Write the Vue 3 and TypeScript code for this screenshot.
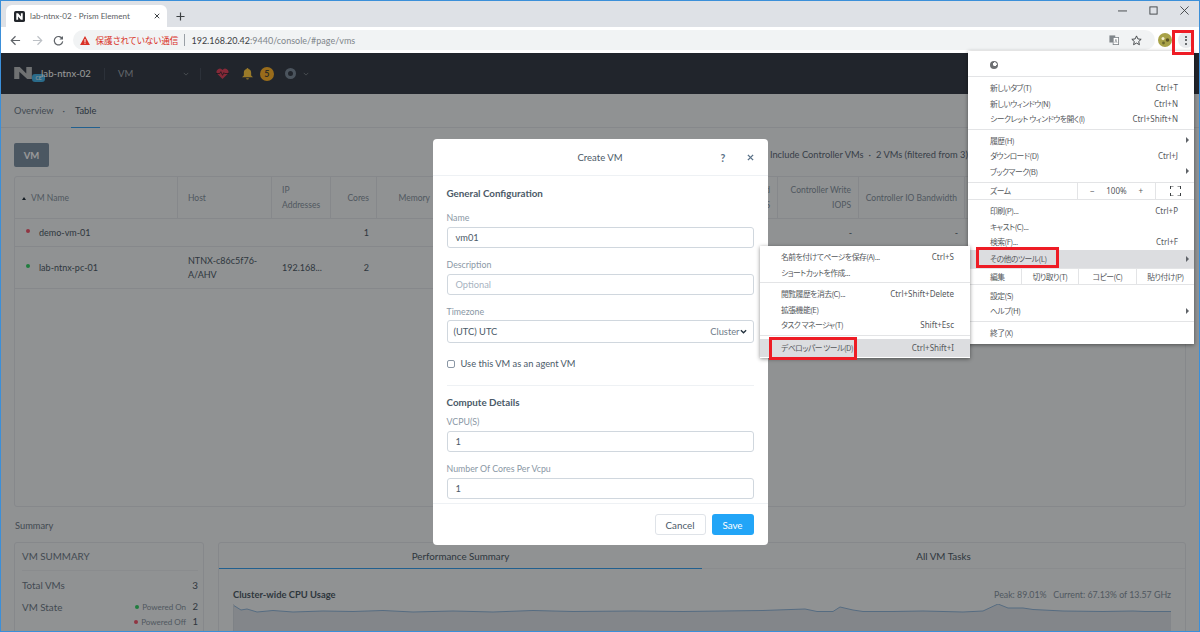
<template>
  <div class="shell">
    <!-- browser chrome -->
    <div class="tabstrip">
      <div class="tab">
        <svg class="favicon" viewBox="0 0 12 12">
          <rect width="12" height="12" rx="2" fill="#22262b" />
          <path d="M2.5 9.5V2.5h2l3 3.6V2.5h2v7h-2l-3-3.6v3.6z" fill="#fff" />
        </svg>
        <span class="tab-title">lab-ntnx-02 - Prism Element</span>
        <svg class="tab-close" viewBox="0 0 8 8"><path d="M1 1l6 6M7 1L1 7" stroke="#3c4043" stroke-width="1.3" /></svg>
      </div>
      <svg class="new-tab" viewBox="0 0 10 10"><path d="M5 .5v9M.5 5h9" stroke="#3c4043" stroke-width="1.3" /></svg>
      <div class="win-controls">
        <svg viewBox="0 0 10 10"><path d="M0 5.5h10" stroke="#3c4043" stroke-width="1" /></svg>
        <svg viewBox="0 0 10 10"><rect x="1" y="1" width="8" height="8" fill="none" stroke="#3c4043" stroke-width="1" /></svg>
        <svg viewBox="0 0 10 10"><path d="M.5.5l9 9M9.5.5l-9 9" stroke="#3c4043" stroke-width="1" /></svg>
      </div>
    </div>
    <div class="toolbar">
      <svg class="nav-icon" viewBox="0 0 12 12"><path d="M11 6H1.6M6 1.4L1.4 6 6 10.6" fill="none" stroke="#5f6368" stroke-width="1.3" /></svg>
      <svg class="nav-icon" viewBox="0 0 12 12"><path d="M1 6h9.4M6 1.4L10.6 6 6 10.6" fill="none" stroke="#bdc1c6" stroke-width="1.3" /></svg>
      <svg class="nav-icon" viewBox="0 0 12 12">
        <path d="M10.2 4.2A4.6 4.6 0 1 0 10.6 7" fill="none" stroke="#5f6368" stroke-width="1.3" />
        <path d="M10.9 1v4H7z" fill="#5f6368" />
      </svg>
      <div class="omnibox">
        <svg class="warn" viewBox="0 0 12 11">
          <path d="M6 0l6 11H0z" fill="#d93025" />
          <path d="M5.4 3.6h1.2v4H5.4zM5.4 8.3h1.2v1.2H5.4z" fill="#fff" />
        </svg>
        <span class="insecure">保護されていない通信</span>
        <span class="omni-sep"></span>
        <span class="url"><b>192.168.20.42</b>:9440/console/#page/vms</span>
        <svg class="translate" viewBox="0 0 12 12">
          <rect x="0.5" y="0.5" width="7" height="8.5" fill="#80868b" />
          <rect x="5" y="3" width="6.5" height="8.5" fill="#fff" stroke="#80868b" />
          <path d="M7 9.5l1.3-4.4 1.3 4.4" fill="none" stroke="#80868b" stroke-width=".8" />
        </svg>
        <svg class="star" viewBox="0 0 12 12"><path d="M6 1l1.5 3.3 3.6.4-2.7 2.4.8 3.5L6 8.8l-3.2 1.8.8-3.5L.9 4.7l3.6-.4z" fill="none" stroke="#3c4043" stroke-width="1" /></svg>
      </div>
      <svg class="avatar" viewBox="0 0 14 14">
        <circle cx="7" cy="7" r="7" fill="#a8a248" />
        <circle cx="5" cy="5.5" r="1.5" fill="#f4efd0" />
        <circle cx="9.5" cy="7" r="1.8" fill="#5c5426" />
        <circle cx="5.5" cy="10" r="1.4" fill="#6d6a2d" />
      </svg>
      <div class="kebab"><i></i><i></i><i></i></div>
    </div>

    <!-- Prism page, dimmed by the dialog backdrop -->
    <div class="app">
      <header class="app-header">
        <svg class="logo" viewBox="0 0 20 14"><path d="M0 0h6l7 7V0h6v13h-5L5.500 5v8H0z" fill="#b9bcbf" /></svg>
        <span class="ce">CE</span>
        <span class="cluster">lab-ntnx-02</span>
        <span class="head-sep"></span>
        <span class="perspective">VM</span>
        <svg class="chev" viewBox="0 0 8 5"><path d="M1 1l3 3 3-3" fill="none" stroke="#7e858c" stroke-width="1.2" /></svg>
        <span class="head-sep second"></span>
        <svg class="heart" viewBox="0 0 14 12">
          <path d="M7 12L1.200 6.200A3.300 3.300 0 0 1 7 2.200a3.300 3.300 0 0 1 5.800 4z" fill="#e0455e" />
          <path d="M0 6h4l1.200-2 1.800 4 1.500-3 .8 1h4.700" fill="none" stroke="#22272e" stroke-width=".8" />
        </svg>
        <svg class="bell" viewBox="0 0 12 13">
          <path d="M6 0a1 1 0 0 1 1 1c2 .5 3 2 3 4v3l2 2H0l2-2V5c0-2 1-3.500 3-4a1 1 0 0 1 1-1z" fill="#ffcb45" />
          <path d="M4.500 11h3a1.500 1.500 0 0 1-3 0z" fill="#ffcb45" />
        </svg>
        <span class="alert-count">5</span>
        <span class="ring"></span>
        <svg class="chev small" viewBox="0 0 8 5"><path d="M1 1l3 3 3-3" fill="none" stroke="#7e858c" stroke-width="1.2" /></svg>
      </header>

      <nav class="subnav">
        <span class="subnav-item">Overview</span>
        <span class="subnav-dot">·</span>
        <span class="subnav-item active">Table</span>
      </nav>

      <main class="content">
        <div class="action-row">
          <button class="vm-btn">VM</button>
          <div class="filter-info">
            <span>Include Controller VMs</span>
            <span class="dot">·</span>
            <span>2 VMs (filtered from 3)</span>
          </div>
        </div>

        <div class="vm-table">
          <div class="t-row t-head">
            <div v-for="col in columns" :key="col.key" class="cell" :class="col.align">
              <template v-if="col.key === 'name'"><span class="sort"></span></template>
              <span>{{ col.label }}</span>
            </div>
          </div>
          <div v-for="vm in vms" :key="vm.name" class="t-row" :style="{ height: vm.height + 'px' }">
            <div class="cell name-cell">
              <span class="state" :class="vm.on ? 'on' : 'off'"></span>
              <span>{{ vm.name }}</span>
            </div>
            <div class="cell">{{ vm.host }}</div>
            <div class="cell">{{ vm.ip }}</div>
            <div class="cell right cores">{{ vm.cores }}</div>
            <div class="cell"></div>
            <div class="cell"></div>
            <div class="cell right"></div>
            <div class="cell right">{{ vm.io }}</div>
            <div class="cell right">{{ vm.io }}</div>
            <div class="cell"></div>
          </div>
        </div>

        <div class="summary-title">Summary</div>
        <div class="summary">
          <section class="card vm-summary">
            <h3>VM SUMMARY</h3>
            <div class="sum-row"><span>Total VMs</span><span class="val">3</span></div>
            <div class="sum-row state-row">
              <span>VM State</span>
              <span class="pow"><i class="state on"></i>Powered On<b>2</b></span>
            </div>
            <div class="sum-row sub-row">
              <span class="pow"><i class="state off"></i>Powered Off<b>1</b></span>
            </div>
          </section>
          <section class="card perf">
            <div class="perf-tabs">
              <div class="perf-tab active">Performance Summary</div>
              <div class="perf-tab">All VM Tasks</div>
            </div>
            <div class="chart-head">
              <span class="chart-title">Cluster-wide CPU Usage</span>
              <span class="chart-stats">Peak: 89.01%&nbsp;&nbsp; Current: 67.13% of 13.57 GHz</span>
            </div>
            <svg class="chart" viewBox="0 0 938 28" preserveAspectRatio="none">
              <path :d="chartArea" fill="#dbe0e6" />
              <path :d="chartLine" fill="none" stroke="#8fb4d8" stroke-width="1" />
              <path d="M.5 0v28" stroke="#d3d9df" stroke-width="1" />
            </svg>
          </section>
        </div>
      </main>

      <div class="backdrop">
        <div class="modal">
          <div class="modal-head">
            <span class="modal-title">Create VM</span>
            <span class="modal-help">?</span>
            <svg class="modal-x" viewBox="0 0 8 8"><path d="M1 1l6 6M7 1L1 7" stroke="#5b7288" stroke-width="1.600" /></svg>
          </div>
          <div class="modal-body">
            <h4>General Configuration</h4>
            <label>Name</label>
            <div class="input">vm01</div>
            <label>Description</label>
            <div class="input placeholder">Optional</div>
            <label>Timezone</label>
            <div class="input select">
              <span>(UTC) UTC</span>
              <span class="tz-right">Cluster<svg viewBox="0 0 8 5"><path d="M1 1l3 3 3-3" fill="none" stroke="#22303c" stroke-width="1.500" /></svg></span>
            </div>
            <div class="check-row"><span class="check"></span>Use this VM as an agent VM</div>
            <hr />
            <h4>Compute Details</h4>
            <label class="tight">VCPU(S)</label>
            <div class="input">1</div>
            <label>Number Of Cores Per Vcpu</label>
            <div class="input">1</div>
          </div>
          <div class="modal-foot">
            <button class="btn-cancel">Cancel</button>
            <button class="btn-save">Save</button>
          </div>
        </div>
      </div>
    </div>

    <!-- chrome menu -->
    <div class="menu main-menu">
      <div class="avatar-row"><span class="mini-avatar"></span></div>
      <template v-for="(row, i) in mainMenu" :key="i">
        <div v-if="row.type === 'sep'" class="sep"></div>
        <div v-else-if="row.type === 'zoom'" class="zoom-row">
          <span class="zoom-label">ズーム</span>
          <span class="zoom-ctl"><span>−</span><span>100%</span><span>+</span></span>
          <span class="zoom-full">
            <svg viewBox="0 0 10 10"><path d="M0 3V0h3M7 0h3v3M10 7v3H7M3 10H0V7" fill="none" stroke="#3c4043" stroke-width="1" /></svg>
          </span>
        </div>
        <div v-else-if="row.type === 'edit'" class="edit-row">
          <span class="edit-label">編集</span>
          <span>切り取り(T)</span>
          <span>コピー(C)</span>
          <span>貼り付け(P)</span>
        </div>
        <div v-else class="item" :class="{ hl: row.hl }">
          <span>{{ row.label }}</span>
          <span v-if="row.keys" class="keys">{{ row.keys }}</span>
          <span v-if="row.arrow" class="arrow"></span>
        </div>
      </template>
    </div>

    <div class="menu sub-menu">
      <template v-for="(row, i) in subMenu" :key="i">
        <div v-if="row.type === 'sep'" class="sep"></div>
        <div v-else class="item" :class="{ hl: row.hl }">
          <span>{{ row.label }}</span>
          <span v-if="row.keys" class="keys">{{ row.keys }}</span>
        </div>
      </template>
    </div>

    <!-- annotations on the screenshot -->
    <div class="mark mark-kebab"></div>
    <div class="mark mark-more"></div>
    <div class="mark mark-dev"></div>
    <div class="window-frame"></div>
  </div>
</template>

<script setup lang="ts">
import { computed } from 'vue'

interface MenuRow {
  type?: 'sep' | 'zoom' | 'edit'
  label?: string
  keys?: string
  arrow?: boolean
  hl?: boolean
}

const columns = [
  { key: 'name', label: 'VM Name', align: '' },
  { key: 'host', label: 'Host', align: '' },
  { key: 'ip', label: 'IP Addresses', align: '' },
  { key: 'cores', label: 'Cores', align: 'right' },
  { key: 'memory', label: 'Memory', align: 'right' },
  { key: 'storage', label: '', align: '' },
  { key: 'read', label: 'Controller Read IOPS', align: 'right' },
  { key: 'write', label: 'Controller Write IOPS', align: 'right' },
  { key: 'bw', label: 'Controller IO Bandwidth', align: 'right' },
  { key: 'latency', label: '', align: '' }
]

const vms = [
  { name: 'demo-vm-01', host: '', ip: '', cores: 1, on: false, height: 28, io: '-' },
  { name: 'lab-ntnx-pc-01', host: 'NTNX-c86c5f76-A/AHV', ip: '192.168...', cores: 2, on: true, height: 42, io: '' }
]

const mainMenu: MenuRow[] = [
  { type: 'sep' },
  { label: '新しいタブ(T)', keys: 'Ctrl+T' },
  { label: '新しいウィンドウ(N)', keys: 'Ctrl+N' },
  { label: 'シークレット ウィンドウを開く(I)', keys: 'Ctrl+Shift+N' },
  { type: 'sep' },
  { label: '履歴(H)', arrow: true },
  { label: 'ダウンロード(D)', keys: 'Ctrl+J' },
  { label: 'ブックマーク(B)', arrow: true },
  { type: 'zoom' },
  { label: '印刷(P)...', keys: 'Ctrl+P' },
  { label: 'キャスト(C)...' },
  { label: '検索(F)...', keys: 'Ctrl+F' },
  { label: 'その他のツール(L)', arrow: true, hl: true },
  { type: 'edit' },
  { label: '設定(S)' },
  { label: 'ヘルプ(H)', arrow: true },
  { type: 'sep' },
  { label: '終了(X)' }
]

const subMenu: MenuRow[] = [
  { label: '名前を付けてページを保存(A)...', keys: 'Ctrl+S' },
  { label: 'ショートカットを作成...' },
  { type: 'sep' },
  { label: '閲覧履歴を消去(C)...', keys: 'Ctrl+Shift+Delete' },
  { label: '拡張機能(E)' },
  { label: 'タスク マネージャ(T)', keys: 'Shift+Esc' },
  { type: 'sep' },
  { label: 'デベロッパー ツール(D)', keys: 'Ctrl+Shift+I', hl: true }
]

// cpu usage samples, x in chart px and y from chart top
const cpu: [number, number][] = [
  [0, 1], [8, 6], [14, 5], [24, 8], [40, 6.500], [60, 8], [90, 7], [120, 7.500], [150, 6.500], [180, 8],
  [220, 7], [260, 8], [300, 6.500], [340, 7.500], [400, 7], [450, 7.500], [490, 7], [530, 6.500], [558, 5.500],
  [572, 5], [584, 7.500], [600, 7.500], [607, 3], [620, 6], [630, 7.500], [660, 7.500], [690, 7], [730, 8],
  [750, 7], [765, 0], [775, 4], [790, 4], [800, 5.500], [830, 7], [870, 7.500], [900, 7], [912, 7.500],
  [938, 7.500]
]

const chartLine = computed(() => cpu.map(([x, y], i) => `${i ? 'L' : 'M'}${x} ${y}`).join(' '))
const chartArea = computed(() => `${chartLine.value} L938 28 L0 28 Z`)
</script>

<style>
html,
body {
  margin: 0;
  background: #fff;
}
</style>

<style scoped>
.shell {
  position: relative;
  width: 1200px;
  height: 632px;
  overflow: hidden;
  font-family: Lato, "Noto Sans CJK JP", sans-serif;
  color: #3c4043;
}

.tabstrip {
  position: relative;
  display: flex;
  align-items: flex-end;
  height: 27px;
  background: #dee1e6;
}

.tab {
  display: flex;
  align-items: center;
  width: 161px;
  height: 22px;
  margin-left: 6px;
  padding: 0 7px 0 8px;
  box-sizing: border-box;
  background: #fff;
  border-radius: 6px 6px 0 0;
}

.favicon {
  width: 11px;
  height: 11px;
  margin-right: 5px;
}

.tab-title {
  flex: 1;
  color: #5b5e62;
  font-size: 8.100px;
  white-space: nowrap;
}

.tab-close {
  width: 6px;
  height: 6px;
}

.new-tab {
  width: 9px;
  height: 9px;
  margin: 0 0 6px 9px;
}

.win-controls {
  position: absolute;
  top: 6px;
  right: 11px;
  display: flex;
  gap: 22px;
}

.win-controls svg {
  width: 9px;
  height: 9px;
}

.toolbar {
  display: flex;
  align-items: center;
  height: 26px;
  padding: 0 6px 0 10px;
  background: #fff;
  box-sizing: border-box;
}

.nav-icon {
  width: 11px;
  height: 11px;
  margin-right: 10.500px;
}

.omnibox {
  display: flex;
  flex: none;
  align-items: center;
  width: 1082px;
  height: 20px;
  margin-left: -2px;
  padding: 0 13px 0 7px;
  box-sizing: border-box;
  background: #f1f3f4;
  border-radius: 10px;
  font-family: Lato, "Noto Sans CJK JP", sans-serif;
}

.warn {
  width: 10px;
  height: 9px;
}

.insecure {
  margin-left: 6px;
  color: #d93025;
  font-size: 8.600px;
  font-feature-settings: "palt";
}

.omni-sep {
  width: 1px;
  height: 12px;
  margin: 0 6px 0 6px;
  background: #9aa0a6;
}

.url {
  flex: 1;
  color: #80868b;
  font-size: 9px;
}

.url b {
  color: #3c4043;
  font-weight: 400;
}

.translate {
  width: 10px;
  height: 10px;
  margin-right: 12px;
}

.star {
  width: 11px;
  height: 11px;
}

.avatar {
  width: 14px;
  height: 14px;
  margin-left: 3px;
}

.kebab {
  display: flex;
  flex-direction: column;
  align-items: center;
  justify-content: center;
  gap: 1.500px;
  width: 16px;
  height: 16px;
  margin-left: 6px;
  background: #e8eaed;
  border-radius: 50%;
}

.kebab i {
  width: 2px;
  height: 2px;
  background: #3c4043;
  border-radius: 50%;
}

.app {
  position: relative;
  height: 579px;
  overflow: hidden;
  background: #f0f3f6;
}

.app-header {
  display: flex;
  align-items: center;
  height: 41px;
  padding-left: 14px;
  background: #373f4a;
  box-sizing: border-box;
}

.logo {
  width: 19px;
  height: 13px;
}

.ce {
  width: 13px;
  height: 8px;
  margin: 9px 0 0 -1px;
  background: #46b2e6;
  border-radius: 3px;
  color: #fff;
  font-size: 5px;
  line-height: 8px;
  text-align: center;
}

.cluster {
  margin-left: -4px;
  color: #fff;
  font-size: 9.500px;
  letter-spacing: .1px;
}

.head-sep {
  width: 1px;
  height: 12px;
  margin: 0 13px 0 13px;
  background: #4a535f;
}

.head-sep.second {
  margin: 0 15px 0 11px;
}

.perspective {
  width: 65px;
  color: #a4abb3;
  font-size: 9.500px;
}

.chev {
  width: 6px;
  height: 4px;
}

.heart {
  width: 13px;
  height: 11px;
}

.bell {
  width: 11px;
  height: 12px;
  margin-left: 13px;
}

.alert-count {
  width: 14px;
  height: 14px;
  margin-left: 7px;
  background: #ffb52e;
  border-radius: 50%;
  color: #4f4a3c;
  font-size: 9px;
  font-weight: 700;
  line-height: 14px;
  text-align: center;
}

.ring {
  width: 5px;
  height: 5px;
  margin-left: 11px;
  border: 3px solid #7e8c9c;
  border-radius: 50%;
}

.chev.small {
  margin-left: 7px;
}

.subnav {
  display: flex;
  align-items: center;
  height: 34px;
  padding-left: 14px;
  box-sizing: border-box;
  border-bottom: 1px solid #dfe3e8;
  font-size: 9.300px;
  color: #6f7c89;
}

.subnav-dot {
  margin: 0 10px 0 9px;
}

.subnav-item {
  position: relative;
  line-height: 32px;
}

.subnav-item.active {
  color: #4b5a68;
}

.subnav-item.active::after {
  content: "";
  position: absolute;
  left: -4px;
  right: -4px;
  bottom: -1px;
  height: 1px;
  background: #3aa0ee;
}

.content {
  padding: 15px 14px 0;
}

.action-row {
  display: flex;
  align-items: flex-start;
  justify-content: space-between;
  height: 24px;
  padding-right: 218px;
}

.vm-btn {
  width: 35px;
  height: 24px;
  padding: 0;
  background: #7d91a4;
  border: 0;
  border-radius: 2px;
  color: #fff;
  font: 700 9.500px Lato, sans-serif;
}

.filter-info {
  display: flex;
  gap: 5px;
  margin-top: 6px;
  color: #5e6b78;
  font-size: 9.300px;
  white-space: nowrap;
}

.vm-table {
  box-sizing: border-box;
  height: 331px;
  margin-top: 9px;
  border: 1px solid #dfe3e8;
  border-radius: 3px;
  font-size: 9px;
  color: #4f5c68;
}

.t-row {
  display: grid;
  grid-template-columns: 163px 94px 59px 46px 61px 271px 69px 81px 106px 1fr;
  border-bottom: 1px solid #dfe3e8;
  box-sizing: border-box;
}

.t-head {
  height: 42px;
  color: #8693a0;
  font-size: 8.500px;
}

.t-head .cell {
  border-right: 1px solid #dfe3e8;
  line-height: 15px;
}

.cell {
  display: flex;
  align-items: center;
  padding: 1px 7px 0 10px;
  min-width: 0;
  line-height: 14.500px;
}

.cell.right {
  justify-content: flex-end;
  padding-left: 3px;
  text-align: right;
}

.cell.cores {
  padding-right: 8px;
}

.sort {
  width: 0;
  height: 0;
  margin: 0 5px 0 -3px;
  border-left: 2.500px solid transparent;
  border-right: 2.500px solid transparent;
  border-bottom: 3px solid #22303c;
}

.name-cell {
  padding-left: 11px;
}

.state {
  display: inline-block;
  flex: none;
  width: 4px;
  height: 4px;
  border-radius: 50%;
}

.state.on {
  background: #36d068;
}

.state.off {
  background: #f0596e;
}

.name-cell .state {
  margin: -5px 9px 0 0;
}

.summary-title {
  margin-top: 12px;
  color: #6f7c89;
  font-size: 9.300px;
  line-height: 14px;
  padding-left: 1px;
}

.summary {
  display: flex;
  gap: 14px;
  margin-top: 9px;
}

.card {
  box-sizing: border-box;
  height: 110px;
  border: 1px solid #dfe3e8;
  border-radius: 3px;
}

.vm-summary {
  flex: none;
  width: 190px;
  padding: 0 5px 0 7px;
  font-size: 9.800px;
  color: #6f7c89;
}

.vm-summary h3 {
  margin: 0;
  height: 27px;
  font-size: 9.800px;
  font-weight: 400;
  line-height: 27px;
  border-bottom: 1px solid #e6e9ed;
}

.sum-row {
  display: flex;
  align-items: center;
  justify-content: space-between;
  height: 15px;
}

.sum-row:nth-of-type(1) {
  margin-top: 6px;
}

.state-row {
  margin-top: 7px;
}

.sub-row {
  justify-content: flex-end;
  height: 15px;
}

.val {
  color: #4f5c68;
}

.pow {
  display: flex;
  align-items: center;
  font-size: 8px;
  color: #8693a0;
}

.pow .state {
  margin-right: 3px;
}

.pow b {
  width: 12px;
  color: #4f5c68;
  font-size: 9.500px;
  font-weight: 400;
  text-align: right;
}

.perf {
  flex: 1;
  min-width: 0;
  overflow: hidden;
}

.perf-tabs {
  display: grid;
  grid-template-columns: 483px 1fr;
  height: 26px;
  border-bottom: 1px solid #e6e9ed;
  box-sizing: border-box;
}

.perf-tab {
  color: #4f5c68;
  font-size: 9.800px;
  line-height: 26px;
  text-align: center;
}

.perf-tab.active {
  box-sizing: border-box;
  border-bottom: 1px solid #3aa0ee;
  height: 26px;
}

.chart-head {
  display: flex;
  justify-content: space-between;
  margin: 20px 14px 0;
  line-height: 12px;
  white-space: nowrap;
}

.chart-title {
  color: #4f5c68;
  font-size: 9.400px;
  font-weight: 700;
}

.chart-stats {
  color: #8693a0;
  font-size: 8.800px;
}

.chart {
  display: block;
  width: 938px;
  height: 28px;
  margin: 3px 0 0 14px;
}

.backdrop {
  position: absolute;
  inset: 0;
  display: flex;
  align-items: center;
  justify-content: center;
  padding-bottom: 1px;
  box-sizing: border-box;
  background: rgba(0, 0, 0, .4);
}

.modal {
  display: flex;
  flex-direction: column;
  width: 335px;
  height: 406px;
  background: #fff;
  border-radius: 4px;
  overflow: hidden;
  color: #4b5a68;
  font-size: 9.300px;
}

.modal-head {
  position: relative;
  flex: none;
  height: 37px;
  border-bottom: 1px solid #eef1f4;
  text-align: center;
  line-height: 38px;
  box-sizing: border-box;
}

.modal-title {
  font-size: 9.500px;
}

.modal-help {
  position: absolute;
  top: 0;
  left: 288px;
  color: #5b7288;
  font-weight: 700;
  font-size: 10.500px;
}

.modal-x {
  position: absolute;
  top: 15px;
  left: 314px;
  width: 7px;
  height: 7px;
}

.modal-body {
  flex: 1;
  min-height: 0;
  padding: 11px 14px 0;
  overflow: hidden;
}

.modal-body h4 {
  margin: 0;
  color: #4b5a68;
  font-size: 9.800px;
  font-weight: 700;
  line-height: 13px;
}

.modal-body label {
  display: block;
  margin: 10.500px 0 4.500px;
  color: #8a97a5;
  font-size: 8.800px;
  line-height: 11px;
}

.modal-body h4 + label {
  margin-top: 11.500px;
}

.modal-body h4 + label.tight {
  margin-top: 7px;
}

.input {
  display: flex;
  align-items: center;
  justify-content: space-between;
  box-sizing: border-box;
  height: 21px;
  padding: 0 8px;
  border: 1px solid #d0d7de;
  border-radius: 3px;
}

.input.placeholder {
  color: #a7b3bf;
}

.input.select {
  height: 23px;
  margin-top: -1px;
  padding: 0 6px;
}

.tz-right {
  display: flex;
  align-items: center;
  color: #6f7c89;
}

.tz-right svg {
  width: 7px;
  height: 5px;
}

.check-row {
  display: flex;
  align-items: center;
  margin-top: 15px;
  line-height: 12px;
}

.check {
  box-sizing: border-box;
  width: 8px;
  height: 8px;
  margin-right: 6px;
  border: 1px solid #8a97a5;
  border-radius: 2px;
}

.modal-body hr {
  height: 1px;
  margin: 15px 0 9.500px;
  border: 0;
  background: #eef1f4;
}

.modal-foot {
  flex: none;
  display: flex;
  justify-content: flex-end;
  gap: 6px;
  height: 42px;
  padding: 10px 14px 0;
  box-sizing: border-box;
  border-top: 1px solid #eef1f4;
}

.modal-foot button {
  height: 21px;
  padding: 0;
  border-radius: 3px;
  font: 400 9.800px Lato, sans-serif;
}

.btn-cancel {
  width: 51px;
  background: #fff;
  border: 1px solid #dfe3e8;
  color: #4b5a68;
}

.btn-save {
  width: 42px;
  background: #22a5f7;
  border: 0;
  color: #fff;
}

.menu {
  position: absolute;
  box-sizing: border-box;
  background: #fff;
  box-shadow: 0 1px 4px rgba(0, 0, 0, .45);
  font-family: "Noto Sans CJK JP", sans-serif;
  font-size: 7.800px;
  letter-spacing: -.5px;
  font-feature-settings: "palt";
  color: #55585c;
}

.main-menu {
  top: 51px;
  left: 968px;
  width: 226px;
  height: 293px;
  padding-top: 5px;
}

.sub-menu {
  top: 246px;
  left: 760px;
  width: 210px;
  height: 112px;
  padding-top: 3px;
}

.avatar-row {
  display: flex;
  align-items: center;
  height: 18px;
  padding-left: 22px;
}

.mini-avatar {
  width: 8px;
  height: 8px;
  background: radial-gradient(circle at 60% 40%, #fff 0 25%, #6d6f72 30%);
  border-radius: 50%;
}

.sep {
  height: 1px;
  margin: 2px 0 3px;
  background: #e3e4e6;
}

.item {
  position: relative;
  display: flex;
  align-items: center;
  justify-content: space-between;
  height: 15.500px;
  padding: 0 16px 0 22px;
}

.sub-menu .item {
  padding: 0 16px 0 21px;
}

.item.hl {
  height: 18px;
  background: #dcdde0;
}

.keys {
  font-family: "Noto Sans", sans-serif;
  font-size: 8px;
  letter-spacing: 0;
}

.arrow {
  position: absolute;
  right: 5px;
  width: 0;
  height: 0;
  border-top: 3px solid transparent;
  border-bottom: 3px solid transparent;
  border-left: 3.500px solid #5f6368;
}

.zoom-row {
  display: grid;
  grid-template-columns: 109px 79px 38px;
  height: 16px;
  margin: 3px 0;
  border-top: 1px solid #e3e4e6;
  border-bottom: 1px solid #e3e4e6;
  line-height: 16px;
}

.zoom-label {
  padding-left: 22px;
}

.zoom-ctl {
  display: flex;
  justify-content: space-between;
  padding: 0 12px;
  border-left: 1px solid #e3e4e6;
  border-right: 1px solid #e3e4e6;
  font-family: "Noto Sans", sans-serif;
  font-size: 8px;
  letter-spacing: 0;
}

.zoom-full {
  display: flex;
  align-items: center;
  justify-content: center;
}

.zoom-full svg {
  width: 11px;
  height: 10px;
}

.edit-row {
  display: grid;
  grid-template-columns: 53px 57px 58px 58px;
  height: 15px;
  margin-bottom: 3px;
  border-top: 1px solid #e3e4e6;
  border-bottom: 1px solid #e3e4e6;
  line-height: 15px;
  text-align: center;
}

.edit-row span + span {
  border-left: 1px solid #e3e4e6;
}

.edit-label {
  padding-left: 22px;
  text-align: left;
}

.mark {
  position: absolute;
  box-sizing: border-box;
  border: 3px solid #ee1c25;
}

.mark-kebab {
  top: 30px;
  left: 1172px;
  width: 22px;
  height: 25px;
}

.mark-more {
  top: 247px;
  left: 976px;
  width: 83px;
  height: 21px;
}

.mark-dev {
  top: 337px;
  left: 769px;
  width: 88px;
  height: 23px;
}

.window-frame {
  position: absolute;
  inset: 0;
  border: 1px solid #3b8fd9;
  pointer-events: none;
}
</style>
